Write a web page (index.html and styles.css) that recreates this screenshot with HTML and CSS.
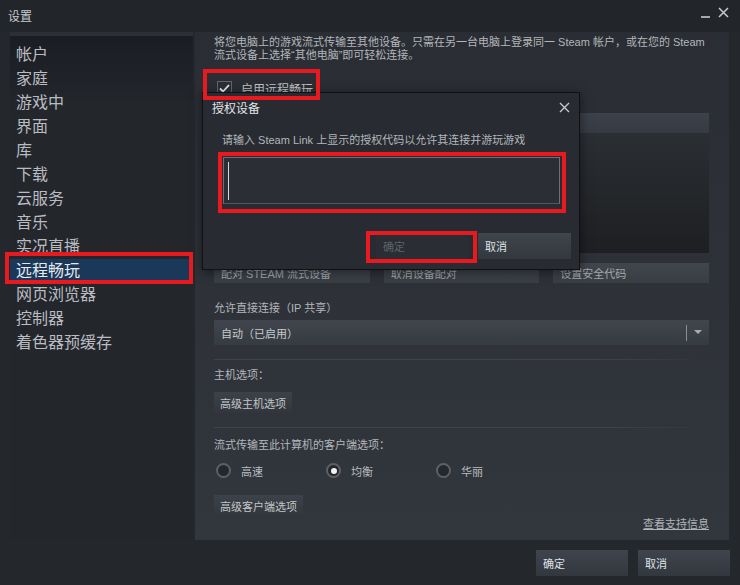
FILE: index.html
```html
<!DOCTYPE html>
<html lang="zh-CN">
<head>
  <title>设置</title>
  <meta charset="utf-8">
  <meta name="viewport" content="width=device-width, initial-scale=1">
  <link rel="stylesheet" href="styles.css">
</head>
<body>
  <div class="window">
    <header class="titlebar">
      <span class="titlebar-name">设置</span>
      <div class="titlebar-controls">
        <svg width="10" height="10" viewBox="0 0 10 10"><path d="M0 9h9" stroke="#c8cbce" stroke-width="1.6"/></svg>
        <svg width="11" height="11" viewBox="0 0 11 11"><path d="M1 1l9 9M10 1l-9 9" stroke="#c8cbce" stroke-width="1.5"/></svg>
      </div>
    </header>

    <div class="main">
      <nav class="sidebar">
        <ul>
          <li>帐户</li>
          <li>家庭</li>
          <li>游戏中</li>
          <li>界面</li>
          <li>库</li>
          <li>下载</li>
          <li>云服务</li>
          <li>音乐</li>
          <li>实况直播</li>
          <li class="active">远程畅玩</li>
          <li>网页浏览器</li>
          <li>控制器</li>
          <li>着色器预缓存</li>
        </ul>
      </nav>

      <section class="content">
        <p class="intro">将您电脑上的游戏流式传输至其他设备。只需在另一台电脑上登录同一 Steam 帐户，或在您的 Steam<br>流式设备上选择“其他电脑”即可轻松连接。</p>

        <label class="toggle">
          <span class="checkbox">
            <svg width="11" height="9" viewBox="0 0 11 9"><path d="M1 4.5l3 3L10 1" fill="none" stroke="#e9ecee" stroke-width="1.8"/></svg>
          </span>
          启用远程畅玩
        </label>

        <div class="devices">
          <div class="devices-head"></div>
          <div class="devices-list"></div>
        </div>

        <div class="pair-actions">
          <button class="btn-flat">配对 STEAM 流式设备</button>
          <button class="btn-flat">取消设备配对</button>
          <button class="btn-flat">设置安全代码</button>
        </div>

        <div class="field-label">允许直接连接（IP 共享）</div>
        <div class="select">
          <span>自动（已启用）</span>
          <span class="select-arrow">
            <svg width="8" height="5" viewBox="0 0 8 5"><path d="M0 0h8L4 4z" fill="#a9adb2"/></svg>
          </span>
        </div>

        <hr class="divider">

        <div class="field-label small-gap">主机选项：</div>
        <button class="btn-small">高级主机选项</button>

        <hr class="divider">

        <div class="field-label radio-label">流式传输至此计算机的客户端选项：</div>
        <div class="radios">
          <label class="radio"><span class="radio-dot"></span>高速</label>
          <label class="radio"><span class="radio-dot checked"></span>均衡</label>
          <label class="radio"><span class="radio-dot"></span>华丽</label>
        </div>

        <button class="btn-small client-btn">高级客户端选项</button>
        <a class="support-link" href="#">查看支持信息</a>
      </section>
    </div>

    <footer class="actions">
      <button class="btn">确定</button>
      <button class="btn">取消</button>
    </footer>

    <!-- authorize device popup -->
    <div class="dialog">
      <div class="dialog-title">
        <span>授权设备</span>
        <svg width="11" height="11" viewBox="0 0 11 11"><path d="M1 1l9 9M10 1l-9 9" stroke="#c6c9cc" stroke-width="1.4"/></svg>
      </div>
      <p class="dialog-text">请输入 Steam Link 上显示的授权代码以允许其连接并游玩游戏</p>
      <div class="code-input"><span class="caret"></span></div>
      <div class="dialog-actions">
        <button class="btn btn-disabled">确定</button>
        <button class="btn">取消</button>
      </div>
    </div>

    <!-- red highlight frames -->
    <div class="mark mark-nav"></div>
    <div class="mark mark-toggle"></div>
    <div class="mark mark-input"></div>
    <div class="mark mark-ok"></div>
  </div>
</body>
</html>
```

FILE: styles.css
```css
*, *::before, *::after {
  margin: 0;
  padding: 0;
  box-sizing: border-box;
}

body {
  width: 740px;
  height: 585px;
  overflow: hidden;
  background-color: #24272c;
  font-family: "Liberation Sans", "Noto Sans CJK SC", sans-serif;
  font-size: 11px;
  color: #b4b8bc;
}

.window {
  position: relative;
  display: flex;
  flex-direction: column;
  width: 740px;
  height: 585px;
  background-color: #24272c;
}

button {
  font-family: inherit;
  border: none;
  cursor: pointer;
  text-align: left;
}

/* title bar */
.titlebar {
  display: flex;
  justify-content: space-between;
  align-items: center;
  height: 32px;
  padding: 0 11px 2px 8px;
  background-color: #22252a;
}

.titlebar-name {
  font-size: 12px;
  color: #c8cbce;
}

.titlebar-controls {
  display: flex;
  align-items: flex-end;
  gap: 7px;
  margin-top: -6px;
}

/* body */
.main {
  display: flex;
  gap: 2px;
  height: 508px;
  padding-left: 10px;
}

.sidebar {
  width: 183px;
  padding-top: 7px;
  border-top: 4px solid #2c2f35;
  background: linear-gradient(#1a1d23, #23262b 70px, #23262b);
}

.sidebar ul {
  list-style: none;
}

.sidebar li {
  height: 24px;
  padding-left: 6px;
  font-size: 16px;
  line-height: 23px;
  color: #b9bdc1;
}

.sidebar li.active {
  background-color: #1a385a;
  color: #e6e9ec;
}

.content {
  display: flex;
  flex-direction: column;
  width: 534px;
  padding: 4px 20px 0 19px;
  background: linear-gradient(#2a2d33, #32363d);
}

.intro {
  line-height: 13px;
  color: #b3b7bb;
}

.toggle {
  display: flex;
  align-items: center;
  gap: 9px;
  height: 15px;
  margin: 19px 0 0 3px;
  font-size: 12px;
  color: #c0c4c8;
}

.checkbox {
  display: flex;
  justify-content: center;
  align-items: center;
  width: 15px;
  height: 15px;
  border: 1px solid #62666c;
  background-color: #2b2e34;
}

.devices {
  margin: 17px 0 0 1px;
}

.devices-head {
  height: 20px;
  background: linear-gradient(#3d414a, #363a41);
}

.devices-list {
  height: 120px;
  background: linear-gradient(#2b2e33, #1d1f22);
}

.pair-actions {
  display: grid;
  grid-template-columns: repeat(3, 1fr);
  gap: 14px;
  margin-top: 10px;
}

.btn-flat {
  height: 20px;
  padding-left: 7px;
  background: linear-gradient(#41454d, #393d44);
  color: #a3a7ac;
  font-size: 11px;
}

.field-label {
  margin-top: 18px;
  line-height: 14px;
  color: #b3b7bb;
}

.field-label.small-gap {
  margin-top: 8px;
}

.field-label.radio-label {
  margin-top: 10px;
}

.select {
  display: flex;
  justify-content: space-between;
  align-items: center;
  height: 25px;
  margin-top: 5px;
  padding-left: 7px;
  background: linear-gradient(#41454d, #363a41);
  color: #c6cacd;
}

.select-arrow {
  display: flex;
  align-items: center;
  height: 16px;
  padding: 0 7px 0 7px;
  border-left: 1px solid #8a8e94;
}

.divider {
  height: 1px;
  margin-top: 14px;
  margin-right: 19px;
  border: none;
  background: linear-gradient(to right, #3f434a, #3f434a 80%, rgba(63, 67, 74, 0.3));
}

.btn-small {
  align-self: flex-start;
  height: 21px;
  margin-top: 10px;
  padding: 0 6px;
  background: linear-gradient(#3d4149, #32363c);
  color: #c2c6c9;
  font-size: 11px;
}

.client-btn {
  margin-top: 17px;
}

.radios {
  display: flex;
  height: 15px;
  margin-top: 11px;
  padding-left: 2px;
}

.radio {
  display: flex;
  align-items: center;
  gap: 10px;
  width: 110px;
  color: #b9bdc1;
}

.radio-dot {
  display: flex;
  justify-content: center;
  align-items: center;
  width: 15px;
  height: 15px;
  border: 2px solid #5d6167;
  border-radius: 50%;
  background-color: #24272c;
}

.radio-dot.checked::after {
  content: "";
  width: 6px;
  height: 6px;
  border-radius: 50%;
  background-color: #eef0f2;
}

.support-link {
  align-self: flex-end;
  margin-top: 1px;
  line-height: 14px;
  color: #aeb3b8;
}

/* bottom buttons */
.actions {
  display: flex;
  justify-content: flex-end;
  gap: 10px;
  height: 45px;
  padding: 10px 10px 0 0;
}

.btn {
  width: 92px;
  height: 26px;
  padding-left: 7px;
  background: linear-gradient(#40444c, #33373e);
  color: #dfe2e5;
  font-size: 11px;
}

/* popup */
.dialog {
  position: absolute;
  top: 92px;
  left: 202px;
  width: 378px;
  height: 178px;
  border: 1px solid #0f1114;
  background-color: #282b31;
  box-shadow: 0 2px 10px rgba(0, 0, 0, 0.5);
}

.dialog-title {
  display: flex;
  justify-content: space-between;
  align-items: center;
  height: 28px;
  padding: 0 9px 0 9px;
  font-size: 12px;
  color: #e3e6e9;
}

.dialog-text {
  margin: 12px 0 0 19px;
  line-height: 14px;
  color: #b3b7bb;
}

.code-input {
  width: 337px;
  height: 47px;
  margin: 10px 0 0 20px;
  padding: 4px 0 0 4px;
  border: 1px solid #6c7076;
  border-bottom-color: #54585e;
  background-color: #2b2e35;
}

.caret {
  display: block;
  width: 1px;
  height: 38px;
  background-color: #d4d7da;
}

.dialog-actions {
  display: flex;
  justify-content: flex-end;
  gap: 9px;
  margin-top: 29px;
  padding-right: 8px;
}

.dialog-actions .btn {
  width: 93px;
}

.btn-disabled {
  background: #2a2d33;
  color: #5e6268;
  cursor: default;
}

/* highlight frames */
.mark {
  position: absolute;
  border: 4px solid #e8191f;
}

.mark-nav {
  top: 252px;
  left: 5px;
  width: 188px;
  height: 32px;
}

.mark-toggle {
  top: 69px;
  left: 203px;
  width: 117px;
  height: 31px;
}

.mark-input {
  top: 152px;
  left: 218px;
  width: 348px;
  height: 61px;
}

.mark-ok {
  top: 231px;
  left: 366px;
  width: 111px;
  height: 32px;
}
```
